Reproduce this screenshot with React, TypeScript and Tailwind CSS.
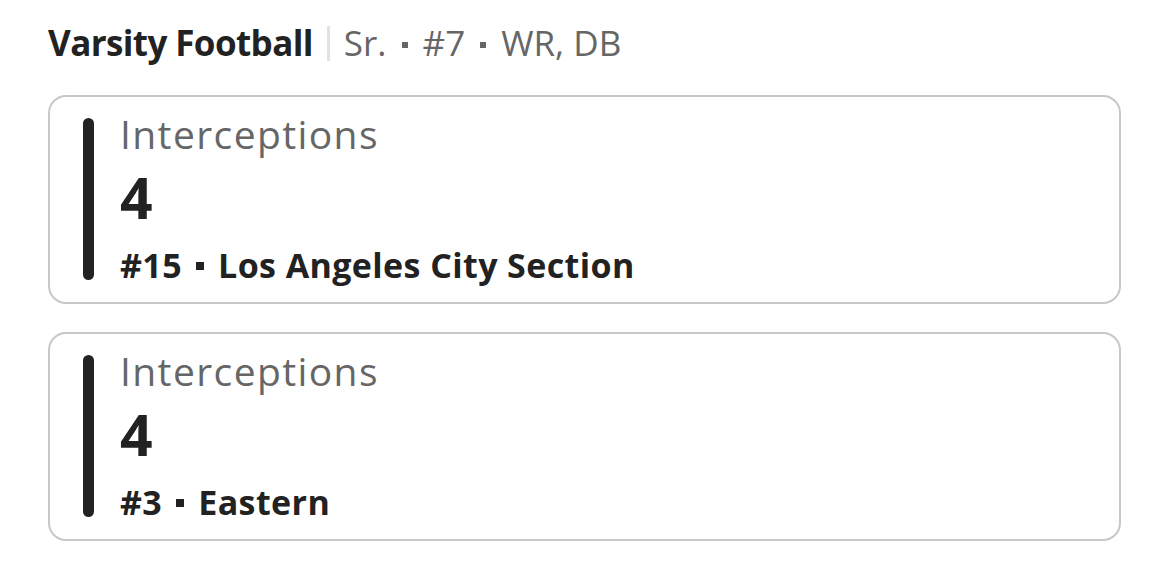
const stats = [
  { label: 'Interceptions', value: '4', rank: '#15', scope: 'Los Angeles City Section' },
  { label: 'Interceptions', value: '4', rank: '#3', scope: 'Eastern' },
];

function StatCard({ label, value, rank, scope }: (typeof stats)[number]) {
  return (
    <div className="flex rounded-[18px] border-2 border-[#c8c8c8] bg-white pl-[33px] pr-6 pt-[21px] pb-[22px]">
      <div className="w-[11px] shrink-0 rounded-full bg-[#222]" />
      <div className="ml-[26px] flex flex-col font-['Open_Sans',sans-serif]">
        <div className="text-[39px] leading-[32px] tracking-[1.4px] text-[#666]">{label}</div>
        <div className="mt-[25px] text-[57px] font-bold leading-[44px] text-[#222]">{value}</div>
        <div className="mt-[31px] flex items-center text-[34px] font-bold leading-[30px] tracking-[0.4px] text-[#222]">
          <span>{rank}</span>
          <span className="mx-[14px] mt-[2px] h-[8px] w-[8px] bg-[#222]" />
          <span>{scope}</span>
        </div>
      </div>
    </div>
  );
}

function Dot() {
  return <span className="mx-[15px] mt-[3px] inline-block h-[6px] w-[6px] bg-[#666]" />;
}

export default function App() {
  return (
    <div className="min-h-screen bg-white px-[48px] pt-[23px]">
      <div className="flex items-baseline font-['Open_Sans',sans-serif] leading-[40px]">
        <span className="text-[35px] font-bold tracking-[-0.6px] text-[#222]">Varsity Football</span>
        <span className="mx-[14px] h-[35px] w-[3px] self-center bg-[#e2e2e2]" />
        <span className="flex items-center text-[35px] text-[#666]">
          Sr.<Dot />#7<Dot />WR, DB
        </span>
      </div>
      <div className="mt-[32px] flex w-[1073px] flex-col gap-[28px]">
        {stats.map((s, i) => (
          <StatCard key={i} {...s} />
        ))}
        <div className="h-[40px] rounded-t-[18px] border-2 border-b-0 border-[#c8c8c8]" />
      </div>
    </div>
  );
}
